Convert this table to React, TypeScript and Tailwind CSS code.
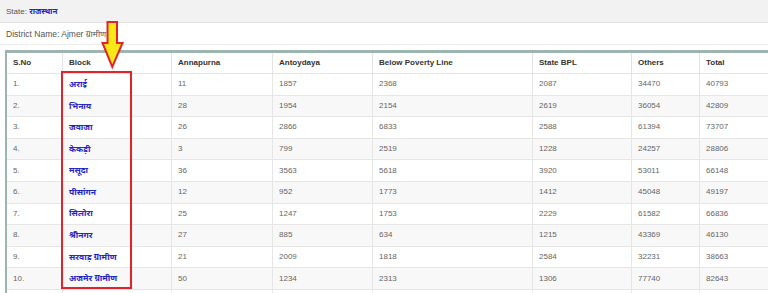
const rows: [string, string, string, string, string, string, string, string][] = [
  ['1.', 'अराई', '11', '1857', '2368', '2087', '34470', '40793'],
  ['2.', 'भिनाय', '28', '1954', '2154', '2619', '36054', '42809'],
  ['3.', 'जवाजा', '26', '2866', '6833', '2588', '61394', '73707'],
  ['4.', 'केकड़ी', '3', '799', '2519', '1228', '24257', '28806'],
  ['5.', 'मसूदा', '36', '3563', '5618', '3920', '53011', '66148'],
  ['6.', 'पीसांगन', '12', '952', '1773', '1412', '45048', '49197'],
  ['7.', 'सिलोरा', '25', '1247', '1753', '2229', '61582', '66836'],
  ['8.', 'श्रीनगर', '27', '885', '634', '1215', '43369', '46130'],
  ['9.', 'सरवाड़ ग्रामीण', '21', '2009', '1818', '2584', '32231', '38663'],
  ['10.', 'अजमेर ग्रामीण', '50', '1234', '2313', '1306', '77740', '82643'],
  ['', '', '', '', '', '', '', ''],
];

const headers = ['S.No', 'Block', 'Annapurna', 'Antoydaya', 'Below Poverty Line', 'State BPL', 'Others', 'Total'];
const widths = ['w-[56px]', 'w-[109px]', 'w-[101px]', 'w-[100px]', 'w-[160px]', 'w-[99px]', 'w-[68px]', 'w-[100px]'];

// yellow marker arrow pointing at the Block column
function Arrow() {
  return (
    <svg className="absolute left-0 top-0 pointer-events-none" width="768" height="293" viewBox="0 0 768 293">
      <polygon
        points="107.5,22 117,22 117,43 122.5,43 112.3,67 102.5,43 107.5,43"
        fill="#f7e816"
        stroke="#e3232c"
        strokeWidth="2"
        strokeLinejoin="miter"
      />
    </svg>
  );
}

export default function App() {
  return (
    <div className="relative w-[768px] h-[293px] overflow-hidden bg-white font-['Liberation_Sans','Noto_Sans',sans-serif] text-[8px] text-[#555]">
      <div className="h-[23px] bg-[#f2f2f2] border-b border-[#e4e4e4] flex items-center px-[6px] pt-[2px]">
        State:&nbsp;<span className="font-bold text-[#2626c4]">राजस्थान</span>
      </div>
      <div className="h-[22px] border-b border-[#ececec] flex items-center px-[6px] pt-[1px] text-[8.5px]">
        District Name: Ajmer ग्रामीण
      </div>
      <div className="pt-[5px] pl-[5px]">
        <table className="table-fixed w-[795px] border-separate border-spacing-0 border-t-[3px] border-l-2 border-[#9db5b1]">
          <thead>
            <tr className="h-[21px]">
              {headers.map((h, i) => (
                <th
                  key={h}
                  className={`${widths[i]} text-left font-bold text-[#333] pl-[6px] border-b border-r border-[#e3e3e3]`}
                >
                  {h}
                </th>
              ))}
            </tr>
          </thead>
          <tbody>
            {rows.map((r, ri) => (
              <tr key={ri} className={`h-[21.6px] ${ri % 2 === 1 ? 'bg-[#f8f8f8]' : 'bg-white'}`}>
                {r.map((c, ci) => (
                  <td
                    key={ci}
                    className={`pl-[6px] border-b border-r border-[#e6e6e6] whitespace-nowrap ${
                      ci === 1 ? 'font-bold text-[#2626c4] text-[8.5px]' : 'text-[#666]'
                    }`}
                  >
                    {c}
                  </td>
                ))}
              </tr>
            ))}
          </tbody>
        </table>
      </div>
      <div className="absolute left-[61px] top-[71px] w-[71px] h-[218px] border-2 border-[#e3232c] pointer-events-none" />
      <Arrow />
    </div>
  );
}
